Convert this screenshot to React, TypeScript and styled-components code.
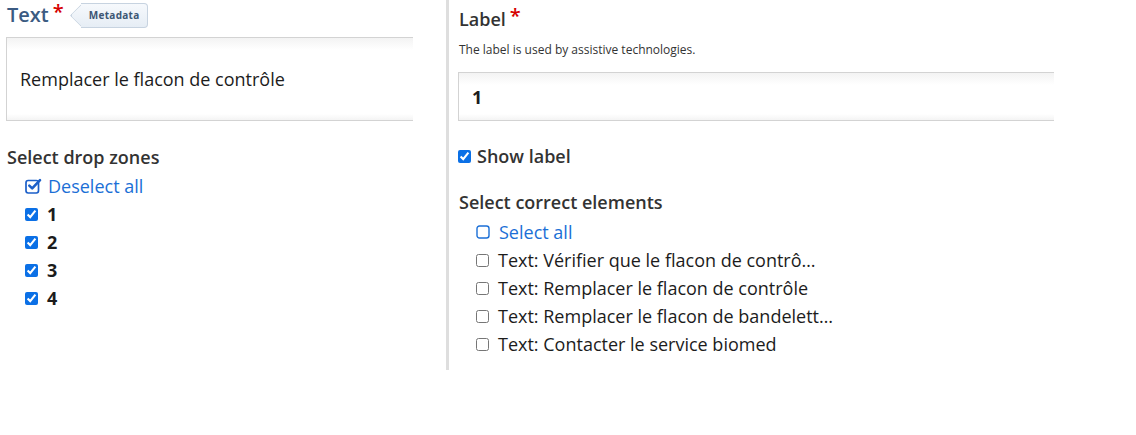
import React from 'react'
import styled, { createGlobalStyle } from 'styled-components'

const GlobalStyle = createGlobalStyle`
  body {
    margin: 0;
    background: #fff;
    font-family: 'Open Sans', 'Liberation Sans', sans-serif;
    color: #212121;
  }
`

const Page = styled.div`
  display: flex;
  align-items: flex-start;
  width: 1136px;
`

const LeftColumn = styled.div`
  width: 446px;
  padding-left: 6px;
  box-sizing: border-box;
`

const Clip = styled.div`
  width: 407px;
  overflow: hidden;
`

const Divider = styled.div`
  width: 3px;
  height: 370px;
  background: #dedede;
`

const RightColumn = styled.div`
  width: 596px;
  padding-left: 9px;
  overflow: hidden;
`

const HeaderRow = styled.div<{ h?: number }>`
  display: flex;
  align-items: center;
  height: ${(p) => p.h || 30}px;
  padding-left: 1px;
`

const FieldTitle = styled.span<{ tone?: string; size?: number }>`
  font-size: ${(p) => p.size || 18}px;
  font-weight: 600;
  color: ${(p) => p.tone || '#333'};
  line-height: 1;
`

const Required = styled.span<{ lift: number }>`
  align-self: flex-start;
  margin-top: ${(p) => p.lift}px;
  margin-left: 4px;
  color: #d60000;
  font-size: 20px;
  font-weight: 600;
  line-height: 20px;
`

const MetaTag = styled.span`
  position: relative;
  display: inline-flex;
  align-items: center;
  height: 23px;
  margin-left: 17px;
  padding: 0 7px 0 8px;
  border: 1px solid #c7d3e0;
  border-left: none;
  border-radius: 0 4px 4px 0;
  background: linear-gradient(#f6f9fc, #e6edf5);
  font-size: 10px;
  font-weight: 700;
  letter-spacing: 0.3px;
  color: #3d5674;

  &::before {
    content: '';
    position: absolute;
    left: -8px;
    top: 3px;
    width: 16px;
    height: 16px;
    transform: rotate(45deg);
    border-left: 1px solid #c7d3e0;
    border-bottom: 1px solid #c7d3e0;
    background: linear-gradient(135deg, #f6f9fc, #e6edf5);
    border-radius: 0 0 0 3px;
    z-index: -1;
  }
`

const TextBox = styled.div<{ h: number; top: number }>`
  display: flex;
  align-items: center;
  height: ${(p) => p.h}px;
  margin-top: ${(p) => p.top}px;
  box-sizing: border-box;
  width: 640px;
  border: 1px solid #d3d3d3;
  background: linear-gradient(#f3f3f3, #fff 12px, #fff calc(100% - 6px), #f4f4f4);
`

const BoxText = styled.span<{ bold?: boolean }>`
  font-size: 18px;
  font-weight: ${(p) => (p.bold ? 700 : 400)};
  color: #1c1c1c;
  padding-left: 13px;
`

const SectionTitle = styled.div<{ top: number }>`
  margin-top: ${(p) => p.top}px;
  font-size: 18px;
  font-weight: 600;
  color: #333;
  padding-left: 1px;
`

const Help = styled.div`
  margin-top: 3px;
  font-size: 12px;
  color: #333;
  padding-left: 1px;
`

const List = styled.ul<{ indent: number; top: number }>`
  list-style: none;
  margin: ${(p) => p.top}px 0 0;
  padding: 0 0 0 ${(p) => p.indent}px;
`

const Item = styled.li`
  display: flex;
  align-items: center;
  height: 28px;
`

const Check = styled.input.attrs({ type: 'checkbox' })`
  width: 13px;
  height: 13px;
  margin: 0;
  accent-color: #0b70e6;
`

const ItemText = styled.span<{ bold?: boolean; gap: number }>`
  margin-left: ${(p) => p.gap}px;
  font-size: 18px;
  font-weight: ${(p) => (p.bold ? 700 : 400)};
  color: #1c1c1c;
  white-space: nowrap;
`

const LinkButton = styled.button<{ gap: number }>`
  display: flex;
  align-items: center;
  gap: ${(p) => p.gap}px;
  padding: 0;
  border: none;
  background: none;
  font-family: inherit;
  font-size: 18px;
  color: #1b6fd6;
  cursor: pointer;
`

const ShowLabelRow = styled.label`
  display: flex;
  align-items: center;
  margin-top: 23px;
`

const ShowLabelText = styled.span`
  margin-left: 6px;
  font-size: 18px;
  font-weight: 600;
  color: #333;
`

const CheckedSquare = () => (
  <svg width="18" height="18" viewBox="0 0 18 18" fill="none">
    <rect x="1" y="3.5" width="12.5" height="12.5" rx="2.2" stroke="#1b5fc9" strokeWidth="1.7" />
    <path d="M4.3 8.6 L7.2 11.4 L15 3.2" stroke="#1b5fc9" strokeWidth="2.6" strokeLinecap="round" strokeLinejoin="round" />
  </svg>
)

const EmptySquare = () => (
  <svg width="14" height="14" viewBox="0 0 14 14" fill="none">
    <rect x="1" y="1" width="12" height="12" rx="2.5" stroke="#1b6fd6" strokeWidth="1.4" />
  </svg>
)

const zones = ['1', '2', '3', '4']
const elements = [
  'Text: Vérifier que le flacon de contrô…',
  'Text: Remplacer le flacon de contrôle',
  'Text: Remplacer le flacon de bandelett…',
  'Text: Contacter le service biomed',
]

export default function App() {
  return (
    <Page>
      <GlobalStyle />
      <LeftColumn>
        <HeaderRow>
          <FieldTitle tone="#3b5b82" size={20}>Text</FieldTitle>
          <Required lift={2}>*</Required>
          <MetaTag>Metadata</MetaTag>
        </HeaderRow>
        <Clip>
          <TextBox h={84} top={7}>
            <BoxText>Remplacer le flacon de contrôle</BoxText>
          </TextBox>
        </Clip>
        <SectionTitle top={24}>Select drop zones</SectionTitle>
        <List indent={19} top={3}>
          <Item>
            <LinkButton gap={5}>
              <CheckedSquare />
              Deselect all
            </LinkButton>
          </Item>
          {zones.map((z) => (
            <Item key={z}>
              <Check defaultChecked />
              <ItemText bold gap={9}>{z}</ItemText>
            </Item>
          ))}
        </List>
      </LeftColumn>
      <Divider />
      <RightColumn>
        <HeaderRow h={38}>
          <FieldTitle>Label</FieldTitle>
          <Required lift={6}>*</Required>
        </HeaderRow>
        <Help>The label is used by assistive technologies.</Help>
        <TextBox h={49} top={14}>
          <BoxText bold>1</BoxText>
        </TextBox>
        <ShowLabelRow>
          <Check defaultChecked />
          <ShowLabelText>Show label</ShowLabelText>
        </ShowLabelRow>
        <SectionTitle top={22}>Select correct elements</SectionTitle>
        <List indent={18} top={4}>
          <Item>
            <LinkButton gap={9}>
              <EmptySquare />
              Select all
            </LinkButton>
          </Item>
          {elements.map((e) => (
            <Item key={e}>
              <Check />
              <ItemText gap={9}>{e}</ItemText>
            </Item>
          ))}
        </List>
      </RightColumn>
    </Page>
  )
}
